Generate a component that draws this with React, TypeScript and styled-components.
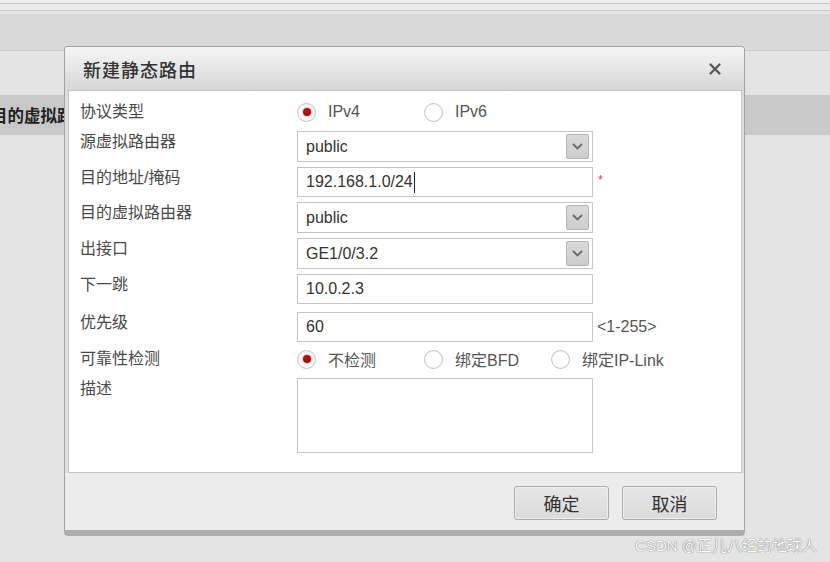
import React from 'react';
import styled, { createGlobalStyle } from 'styled-components';

const GlobalStyle = createGlobalStyle`
  html, body {
    margin: 0;
    padding: 0;
    background: #e4e4e4;
    overflow: hidden;
  }
  body {
    font-family: "Liberation Sans", "Noto Sans CJK SC", Arial, sans-serif;
    -webkit-font-smoothing: antialiased;
  }
`;

const Page = styled.div`
  position: relative;
  width: 100%;
  height: 100vh;
  min-height: 562px;
  background: #e4e4e4;
  overflow: hidden;
`;

const Strip = styled.div<{ $h: number; $bg: string; $line?: string }>`
  height: ${p => p.$h}px;
  background: ${p => p.$bg};
  border-bottom: ${p => (p.$line ? `1px solid ${p.$line}` : 'none')};
`;

const Toolbar = styled.div`
  height: 36px;
  background: #d9d9d9;
  border-bottom: 1px solid #cdcdcd;
`;

const Spacer = styled.div`
  height: 44px;
`;

const GridHeader = styled.div`
  height: 40px;
  background: #c9c9c9;
  display: flex;
  align-items: center;
  overflow: hidden;
`;

// only the part left of the dialog shows; the rest sits under it
const GridHeaderCell = styled.div`
  flex-shrink: 0;
  margin-left: -9px;
  font-size: 16.5px;
  font-weight: bold;
  color: #222;
  white-space: nowrap;
`;

const Dialog = styled.div`
  position: absolute;
  left: 64px;
  top: 46px;
  width: 681px;
  box-sizing: border-box;
  display: flex;
  flex-direction: column;
  background: #dedede;
  border: 1px solid #a2a2a2;
  border-bottom: 6px solid #acacac;
  border-radius: 4px;
`;

const Header = styled.div`
  height: 43px;
  display: flex;
  align-items: center;
  justify-content: space-between;
  padding: 0 23px 0 18px;
  background: linear-gradient(#f6f6f6, #d6d6d6);
  border-radius: 3px 3px 0 0;
`;

const Title = styled.div`
  font-size: 18px;
  letter-spacing: 1px;
  font-weight: 500;
  color: #333;
`;

const CloseButton = styled.button`
  border: none;
  background: none;
  padding: 0;
  width: 12px;
  height: 12px;
  display: flex;
  cursor: pointer;
`;

const Body = styled.div`
  height: 383px;
  box-sizing: border-box;
  margin: 0 2px 0 3px;
  background: #fff;
  border: 1px solid #c4c4c4;
  padding: 7px 0 0 11px;
  display: flex;
  flex-direction: column;
  gap: 5px;
`;

const Row = styled.div<{ $center?: boolean; $h?: number; $mt?: number }>`
  display: grid;
  grid-template-columns: 217px auto;
  align-items: ${p => (p.$center ? 'center' : 'start')};
  height: ${p => (p.$h ? `${p.$h}px` : 'auto')};
  margin-top: ${p => p.$mt ?? 0}px;
`;

const Label = styled.div`
  font-size: 16px;
  line-height: 22px;
  color: #484848;
`;

const Control = styled.div`
  display: flex;
  align-items: center;
`;

const TextBox = styled.div<{ $h?: number }>`
  position: relative;
  width: 296px;
  height: ${p => p.$h ?? 30}px;
  box-sizing: border-box;
  border: 1px solid #c6c6c6;
  background: #fff;
  padding: 0 8px;
  display: flex;
  align-items: center;
  font-size: 16px;
  color: #333;
`;

const Caret = styled.span`
  display: inline-block;
  width: 1px;
  height: 21px;
  margin-left: 1px;
  background: #222;
`;

const ArrowBox = styled.span`
  position: absolute;
  right: 3px;
  top: 2px;
  width: 23px;
  height: 25px;
  box-sizing: border-box;
  border: 1px solid #b4b4b4;
  border-radius: 2px;
  background: linear-gradient(#dadada, #cdcdcd);
  display: flex;
  align-items: center;
  justify-content: center;
`;

const Required = styled.span`
  margin-left: 5px;
  margin-top: -6px;
  font-size: 13px;
  color: #e84a4a;
`;

const Hint = styled.span`
  margin-left: 4px;
  font-size: 16px;
  color: #555;
`;

const TextArea = styled.div`
  width: 296px;
  height: 75px;
  box-sizing: border-box;
  border: 1px solid #c6c6c6;
  background: #fff;
`;

const RadioGroup = styled.div`
  display: flex;
  align-items: center;
`;

const RadioOption = styled.label`
  width: 127px;
  display: flex;
  align-items: center;
  gap: 12px;
  font-size: 16px;
  color: #555;
  white-space: nowrap;
`;

const RadioCircle = styled.span<{ $checked?: boolean }>`
  width: 19px;
  height: 19px;
  box-sizing: border-box;
  border-radius: 50%;
  border: 1px solid #c4c4c4;
  background: radial-gradient(circle at 50% 40%, #ffffff 55%, #efefef 100%);
  box-shadow: inset 0 1px 1px rgba(0, 0, 0, 0.06);
  display: flex;
  align-items: center;
  justify-content: center;
  flex-shrink: 0;

  &::after {
    content: '';
    display: ${p => (p.$checked ? 'block' : 'none')};
    width: 8px;
    height: 8px;
    border-radius: 50%;
    background: radial-gradient(circle at 45% 40%, #c81010, #9a0000);
    box-shadow: 0 0 1px 1px rgba(200, 40, 40, 0.25);
  }
`;

const Footer = styled.div`
  height: 57px;
  box-sizing: border-box;
  background: #ececec;
  display: flex;
  justify-content: flex-end;
  align-items: flex-start;
  gap: 13px;
  padding: 13px 27px 0 0;
`;

const Button = styled.button`
  width: 95px;
  height: 34px;
  box-sizing: border-box;
  border: 1px solid #ababab;
  border-radius: 3px;
  background: linear-gradient(#e6e6e6, #dbdbdb);
  box-shadow: inset 0 0 0 1px #efefef;
  font-family: inherit;
  font-size: 18px;
  color: #333;
  cursor: pointer;
`;

const Watermark = styled.div`
  position: absolute;
  right: 13px;
  bottom: 6px;
  font-size: 15px;
  line-height: 20px;
  color: #ffffff;
  text-shadow: 0 0 1px rgba(0, 0, 0, 0.55), 0 0 1px rgba(0, 0, 0, 0.3);
  white-space: nowrap;
`;

const Chevron = () => (
  <svg width="11" height="7" viewBox="0 0 11 7">
    <path d="M1 1l4.5 4.5L10 1" fill="none" stroke="#6a6a6a" strokeWidth="1.8" />
  </svg>
);

const CloseIcon = () => (
  <svg width="12" height="12" viewBox="0 0 12 12">
    <path d="M1.5 1.5l9 9M10.5 1.5l-9 9" stroke="#555" strokeWidth="2.2" strokeLinecap="round" />
  </svg>
);

type RadioItem = { label: string; checked?: boolean };

const Radios: React.FC<{ items: RadioItem[] }> = ({ items }) => (
  <RadioGroup>
    {items.map(item => (
      <RadioOption key={item.label}>
        <RadioCircle $checked={item.checked} />
        {item.label}
      </RadioOption>
    ))}
  </RadioGroup>
);

const SelectBox: React.FC<{ value: string }> = ({ value }) => (
  <TextBox $h={31}>
    {value}
    <ArrowBox>
      <Chevron />
    </ArrowBox>
  </TextBox>
);

const App: React.FC = () => {
  return (
    <>
      <GlobalStyle />
      <Page>
        <Strip $h={3} $bg="#efefef" $line="#c6c6c6" />
        <Strip $h={6} $bg="#ececec" $line="#c9c9c9" />
        <Strip $h={3} $bg="#e6e6e6" />
        <Toolbar />
        <Spacer />
        <GridHeader>
          <GridHeaderCell>目的虚拟路</GridHeaderCell>
        </GridHeader>

        <Dialog>
          <Header>
            <Title>新建静态路由</Title>
            <CloseButton aria-label="关闭">
              <CloseIcon />
            </CloseButton>
          </Header>

          <Body>
            <Row $center $h={28}>
              <Label>协议类型</Label>
              <Radios items={[{ label: 'IPv4', checked: true }, { label: 'IPv6' }]} />
            </Row>
            <Row>
              <Label>源虚拟路由器</Label>
              <SelectBox value="public" />
            </Row>
            <Row>
              <Label>目的地址/掩码</Label>
              <Control>
                <TextBox>
                  192.168.1.0/24
                  <Caret />
                </TextBox>
                <Required>*</Required>
              </Control>
            </Row>
            <Row>
              <Label>目的虚拟路由器</Label>
              <SelectBox value="public" />
            </Row>
            <Row>
              <Label>出接口</Label>
              <SelectBox value="GE1/0/3.2" />
            </Row>
            <Row>
              <Label>下一跳</Label>
              <TextBox>10.0.2.3</TextBox>
            </Row>
            <Row $mt={3}>
              <Label>优先级</Label>
              <Control>
                <TextBox>60</TextBox>
                <Hint>&lt;1-255&gt;</Hint>
              </Control>
            </Row>
            <Row $center $h={22}>
              <Label>可靠性检测</Label>
              <Radios
                items={[
                  { label: '不检测', checked: true },
                  { label: '绑定BFD' },
                  { label: '绑定IP-Link' },
                ]}
              />
            </Row>
            <Row $mt={4}>
              <Label>描述</Label>
              <TextArea />
            </Row>
          </Body>

          <Footer>
            <Button>确定</Button>
            <Button>取消</Button>
          </Footer>
        </Dialog>

        <Watermark>CSDN @正儿八经的地球人</Watermark>
      </Page>
    </>
  );
};

export default App;
